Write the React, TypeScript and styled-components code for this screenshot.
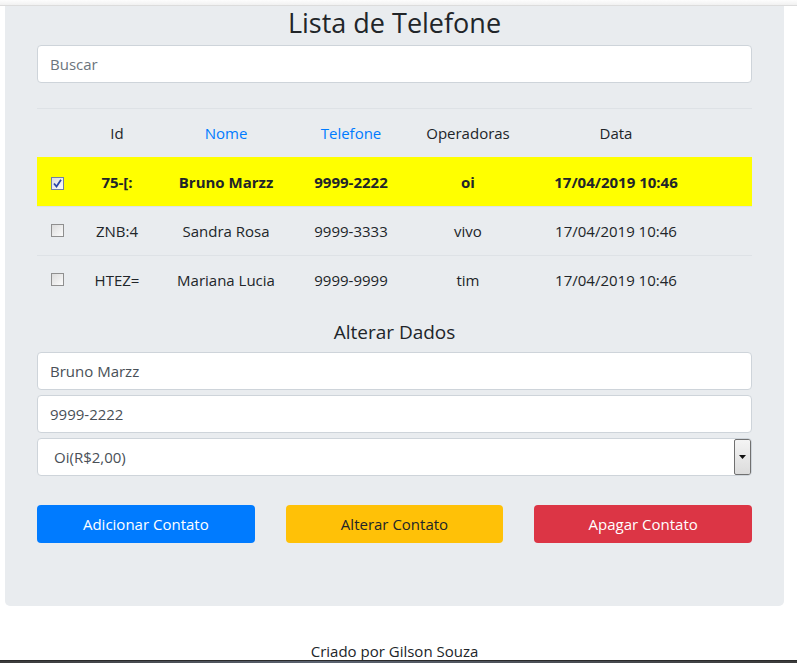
import React from "react";
import styled, { createGlobalStyle } from "styled-components";

const GlobalStyle = createGlobalStyle`
  * { box-sizing: border-box; }
  body {
    margin: 0;
    background: #fff;
    color: #212529;
    font-family: "Open Sans", "Noto Sans", sans-serif;
    font-size: 16px;
  }
`;

const TopStrip = styled.div`
  height: 6px;
  background: linear-gradient(#fdfdfd, #f1f1f1);
  border-bottom: 1px solid #dcdcdc;
`;

const Page = styled.div`
  padding: 0 13px 0 5px;
`;

const Panel = styled.main`
  background: #e9ecef;
  border-radius: 0 0 5px 5px;
  padding: 0 32px 63px;
`;

const Title = styled.h3`
  margin: 0 0 6px;
  font-size: 27px;
  font-weight: 400;
  line-height: 33px;
  text-align: center;
`;

const Input = styled.input`
  display: block;
  width: 100%;
  height: 38px;
  padding: 0 12px;
  border: 1px solid #ced4da;
  border-radius: 4px;
  background: #fff;
  color: #495057;
  font: inherit;
  font-size: 15px;
  &::placeholder { color: #6c757d; }
`;

const Table = styled.div`
  margin: 25px 0 16px;
`;

const Row = styled.div<{ $active?: boolean }>`
  display: grid;
  grid-template-columns: 40px 80px 138px 112px 122px 174px 1fr;
  align-items: center;
  height: 49px;
  border-top: 1px solid ${p => (p.$active ? "#ffff00" : "#dee2e6")};
  background: ${p => (p.$active ? "#ffff00" : "transparent")};
  font-weight: ${p => (p.$active ? 700 : 400)};
  font-size: 15px;
`;

const Cell = styled.div<{ $link?: boolean }>`
  text-align: center;
  white-space: nowrap;
  color: ${p => (p.$link ? "#007bff" : "#212529")};
`;

const Check = styled.span<{ $on?: boolean }>`
  display: inline-flex;
  align-items: center;
  justify-content: center;
  width: 13px;
  height: 13px;
  margin-left: 14px;
  border: 1px solid ${p => (p.$on ? "#6f7fa8" : "#8f8f8f")};
  background: linear-gradient(135deg, #dcdcdc, #fbfbfb);
  svg { display: block; }
`;

const SubTitle = styled.h5`
  margin: 0 0 8px;
  font-size: 19px;
  font-weight: 400;
  line-height: 24px;
  text-align: center;
`;

const Fields = styled.div`
  display: flex;
  flex-direction: column;
  gap: 5px;
`;

const SelectBox = styled.div`
  display: flex;
  height: 38px;
  border: 1px solid #ced4da;
  border-radius: 4px;
  background: #fff;
  overflow: hidden;
`;

const Select = styled.select`
  flex: 1;
  appearance: none;
  border: 0;
  background: transparent;
  padding: 0 16px;
  color: #495057;
  font: inherit;
  font-size: 15px;
  outline: none;
`;

const DropButton = styled.span`
  display: flex;
  align-items: center;
  justify-content: center;
  width: 17px;
  margin: 0 0 0 0;
  border: 1px solid #707070;
  border-radius: 2px;
  background: linear-gradient(#f4f4f4, #dcdcdc);
`;

const Actions = styled.div`
  display: grid;
  grid-template-columns: repeat(3, 1fr);
  gap: 31px;
  margin-top: 29px;
`;

const Button = styled.button<{ $variant: "primary" | "warning" | "danger" }>`
  height: 38px;
  border: 0;
  border-radius: 4px;
  font: inherit;
  font-size: 15px;
  cursor: pointer;
  background: ${p =>
    p.$variant === "primary" ? "#007bff" : p.$variant === "warning" ? "#ffc107" : "#dc3545"};
  color: ${p => (p.$variant === "warning" ? "#212529" : "#fff")};
`;

const Footer = styled.footer`
  margin-top: 33px;
  text-align: center;
  font-size: 15px;
  line-height: 24px;
`;

const Taskbar = styled.div`
  position: fixed;
  left: 0;
  right: 0;
  bottom: 0;
  height: 3px;
  border-top: 1px solid #2b2b2b;
  background: linear-gradient(90deg, #3a3a3a, #5a6270 40%, #3a3a3a);
`;

const contacts = [
  { id: "75-[:", nome: "Bruno Marzz", tel: "9999-2222", op: "oi", data: "17/04/2019 10:46", on: true },
  { id: "ZNB:4", nome: "Sandra Rosa", tel: "9999-3333", op: "vivo", data: "17/04/2019 10:46", on: false },
  { id: "HTEZ=", nome: "Mariana Lucia", tel: "9999-9999", op: "tim", data: "17/04/2019 10:46", on: false },
];

export default function App() {
  return (
    <>
      <GlobalStyle />
      <TopStrip />
      <Page>
        <Panel>
          <Title>Lista de Telefone</Title>
          <Input placeholder="Buscar" />
          <Table>
            <Row>
              <Cell />
              <Cell>Id</Cell>
              <Cell $link>Nome</Cell>
              <Cell $link>Telefone</Cell>
              <Cell>Operadoras</Cell>
              <Cell>Data</Cell>
              <Cell />
            </Row>
            {contacts.map(c => (
              <Row key={c.id} $active={c.on}>
                <Cell style={{ textAlign: "left" }}>
                  <Check $on={c.on}>
                    {c.on && (
                      <svg width="9" height="9" viewBox="0 0 9 9">
                        <path d="M1 4.5 L3.5 7.5 L8 0.8" fill="none" stroke="#2a46a8" strokeWidth="1.8" />
                      </svg>
                    )}
                  </Check>
                </Cell>
                <Cell>{c.id}</Cell>
                <Cell>{c.nome}</Cell>
                <Cell>{c.tel}</Cell>
                <Cell>{c.op}</Cell>
                <Cell>{c.data}</Cell>
                <Cell />
              </Row>
            ))}
          </Table>
          <SubTitle>Alterar Dados</SubTitle>
          <Fields>
            <Input defaultValue="Bruno Marzz" />
            <Input defaultValue="9999-2222" />
            <SelectBox>
              <Select defaultValue="oi">
                <option value="oi">Oi(R$2,00)</option>
                <option value="vivo">Vivo(R$1,00)</option>
                <option value="tim">Tim(R$3,00)</option>
              </Select>
              <DropButton>
                <svg width="7" height="4" viewBox="0 0 7 4">
                  <path d="M0 0 H7 L3.5 4 Z" fill="#111" />
                </svg>
              </DropButton>
            </SelectBox>
          </Fields>
          <Actions>
            <Button $variant="primary">Adicionar Contato</Button>
            <Button $variant="warning">Alterar Contato</Button>
            <Button $variant="danger">Apagar Contato</Button>
          </Actions>
        </Panel>
        <Footer>Criado por Gilson Souza</Footer>
      </Page>
      <Taskbar />
    </>
  );
}
